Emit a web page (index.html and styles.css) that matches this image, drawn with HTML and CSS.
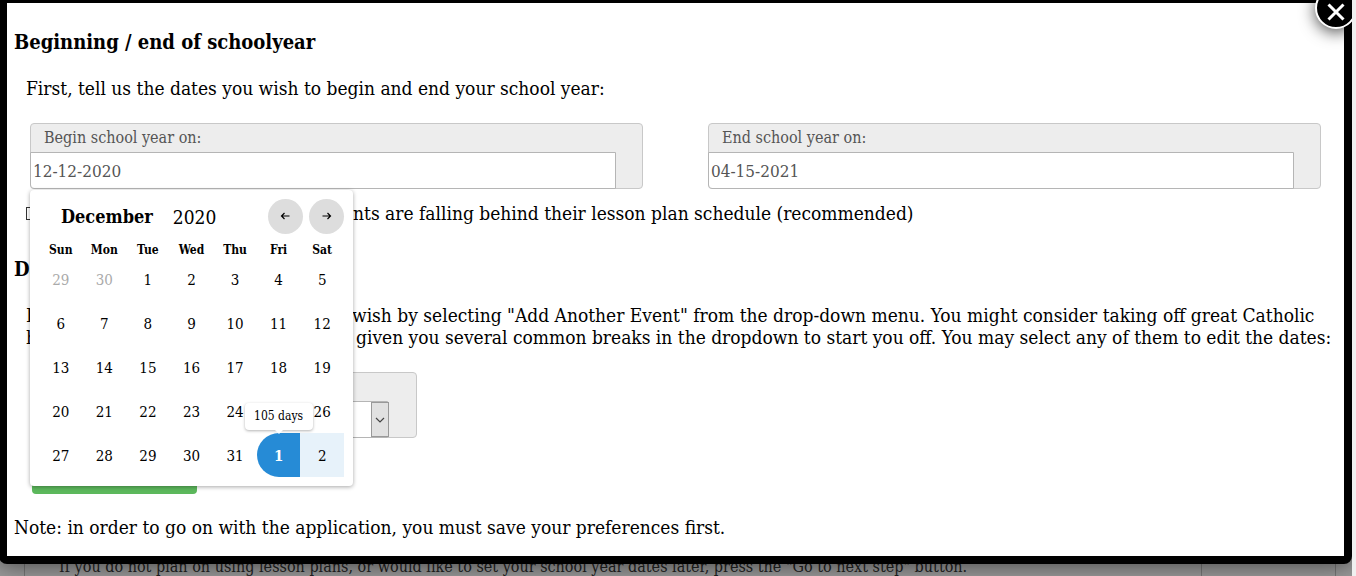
FILE: index.html
```html
<!DOCTYPE html>
<html lang="en">
<head>
<meta charset="utf-8">
<title>School year preferences</title>
<link rel="stylesheet" href="styles.css">
</head>
<body>
<div class="page">
  <main class="modal" role="dialog" aria-label="School year preferences">
    <button class="close" type="button" aria-label="Close">
      <svg width="20" height="20" viewBox="0 0 20 20"><path d="M2.500 2.500 17.500 17.500M17.500 2.500 2.500 17.500" stroke="#fff" stroke-width="3" fill="none"/></svg>
    </button>

    <h2 class="heading">Beginning / end of schoolyear</h2>
    <p class="text">First, tell us the dates you wish to begin and end your school year:</p>

    <div class="fields">
      <div class="field field-begin">
        <label class="label" for="begin">Begin school year on:</label>
        <input class="input" id="begin" type="text" value="12-12-2020">

        <div class="picker">
          <div class="picker-head">
            <strong class="month">December</strong>
            <span class="year">2020</span>
            <button class="nav" type="button" aria-label="Previous month"><svg width="11" height="11" viewBox="0 0 11 11"><path d="M9.500 5H1.500M4.500 2l-3 3 3 3"/></svg></button>
            <button class="nav" type="button" aria-label="Next month"><svg width="11" height="11" viewBox="0 0 11 11"><path d="M1.500 5h8M6.500 2l3 3-3 3"/></svg></button>
          </div>
          <table class="days">
            <thead><tr><th>Sun</th><th>Mon</th><th>Tue</th><th>Wed</th><th>Thu</th><th>Fri</th><th>Sat</th></tr></thead>
            <tbody>
              <tr><td class="muted">29</td><td class="muted">30</td><td>1</td><td>2</td><td>3</td><td>4</td><td>5</td></tr>
              <tr><td>6</td><td>7</td><td>8</td><td>9</td><td>10</td><td>11</td><td>12</td></tr>
              <tr><td>13</td><td>14</td><td>15</td><td>16</td><td>17</td><td>18</td><td>19</td></tr>
              <tr><td>20</td><td>21</td><td>22</td><td>23</td><td>24</td><td></td><td>26</td></tr>
              <tr><td>27</td><td>28</td><td>29</td><td>30</td><td>31</td><td class="start">1<span class="tip">105 days</span></td><td class="range">2</td></tr>
            </tbody>
          </table>
        </div>
      </div>
      <div class="field">
        <label class="label" for="end">End school year on:</label>
        <input class="input" id="end" type="text" value="04-15-2021">
      </div>
    </div>

    <div class="check-row">
      <input class="check" id="notify" type="checkbox" checked>
      <label for="notify"><span class="check-lead">Notify me if stude</span>nts are falling behind their lesson plan schedule (recommended)</label>
    </div>

    <h2 class="heading heading-next">Days off</h2>
    <p class="text"><span class="lead">Include as many events as you</span>wish by selecting "Add Another Event" from the drop-down menu. You might consider taking off great Catholic<br><span class="lead lead-wide">holidays. We have</span>given you several common breaks in the dropdown to start you off. You may select any of them to edit the dates:</p>

    <div class="field field-event">
      <label class="label" for="event">Select event:</label>
      <div class="select-wrap">
        <select class="input select" id="event"><option></option></select>
        <span class="arrow"><svg width="10" height="6" viewBox="0 0 10 6"><path d="M1 1l4 4 4-4" fill="none" stroke="#444" stroke-width="1.200"/></svg></span>
      </div>
    </div>

    <button class="save" type="button">Save</button>
    <p class="note">Note: in order to go on with the application, you must save your preferences first.</p>
  </main>
  <div class="backdrop">
    <div class="backdrop-main">If you do not plan on using lesson plans, or would like to set your school year dates later, press the "Go to next step" button.</div>
    <div class="backdrop-side"></div>
  </div>
</div>
</body>
</html>
```
FILE: styles.css
```css
* { box-sizing: border-box; }
body {
  margin: 0;
  overflow: hidden;
  background: #f0f0f0;
  color: #000;
  font: 19px/22px "DejaVu Serif Condensed", "DejaVu Serif", serif;
}
h2, p { margin: 0; font-size: inherit; }
button, input, select { font: inherit; color: inherit; }
.page {
  margin-right: 4px;
  height: 100vh;
  overflow: hidden;
  background: #999;
}
.modal {
  position: relative;
  z-index: 1;
  margin: -5px 0 0 -1px;
  padding: 25px 23px 18px;
  border: 8px solid #000;
  border-radius: 8px;
  background: #fff;
  box-shadow: 0 0 25px rgba(0, 0, 0, 0.6);
}
.close {
  position: absolute;
  top: -16px;
  right: -13px;
  display: flex;
  align-items: center;
  justify-content: center;
  width: 42px;
  height: 42px;
  padding: 7px 0 0;
  border: 2px solid #fff;
  border-radius: 50%;
  background: #000;
  box-shadow: 0 3px 16px rgba(0, 0, 0, 0.7);
}
.heading {
  margin-left: -16px;
  font-size: 20px;
  line-height: 28px;
}
.heading-next { margin-top: 31px; }
.text {
  margin: 21px -20px 24px -4px;
  white-space: nowrap;
}
.fields {
  display: grid;
  grid-template-columns: 1fr 1fr;
  gap: 65px;
}
.field {
  position: relative;
  height: 66px;
  border: 1px solid #c8c8c8;
  border-radius: 4px;
  background: #ededed;
  color: #555;
  font-size: 16px;
}
.label {
  display: block;
  height: 28px;
  padding-left: 13px;
  line-height: 27px;
}
.input {
  display: block;
  width: calc(100% - 25px);
  height: 37px;
  margin-left: -1px;
  padding: 0 2px;
  border: 1px solid #b5b5b5;
  border-radius: 0 0 0 4px;
  background: #fff;
  font-size: 17px;
}
.picker {
  position: absolute;
  z-index: 2;
  top: 66px;
  left: -1px;
  width: 323px;
  padding: 9px 9px 9px;
  border-radius: 4px;
  background: #fff;
  box-shadow: 0 1px 4px rgba(0, 0, 0, 0.35);
  color: #000;
}
.picker-head {
  display: flex;
  align-items: center;
  gap: 6px;
  height: 35px;
  padding-left: 22px;
  font-size: 19px;
}
.month { font-size: 18px; }
.year { flex: 1; padding-left: 14px; }
.nav {
  display: flex;
  align-items: center;
  justify-content: center;
  width: 35px;
  height: 35px;
  padding: 0;
  border: 0;
  border-radius: 50%;
  background: #ddd;
}
.nav path { fill: none; stroke: #000; stroke-width: 1.2; }
.days {
  width: 100%;
  table-layout: fixed;
  border-collapse: collapse;
  text-align: center;
}
.days th { height: 23px; padding: 10px 0 0; font-size: 12px; line-height: 13px; }
.days td { position: relative; height: 44px; padding: 2px 0 0; font-size: 15px; }
.days .muted { color: #aaa; }
.days .start {
  border-radius: 22px 0 0 22px;
  background: #268bd6;
  color: #fff;
  font-weight: bold;
}
.days .range { background: #e7f2fa; }
.tip {
  position: absolute;
  bottom: 47px;
  left: 50%;
  width: 68px;
  border-radius: 4px;
  background: #fff;
  box-shadow: 0 1px 3px rgba(0, 0, 0, 0.3);
  color: #000;
  font-size: 12px;
  font-weight: normal;
  line-height: 27px;
  transform: translateX(-50%);
}
.tip::after {
  content: "";
  position: absolute;
  top: 100%;
  left: 30px;
  border: 4px solid transparent;
  border-top-color: #fff;
  border-bottom: 0;
}
.check-row {
  display: flex;
  align-items: center;
  margin: 13px 0 0 -4px;
}
.check {
  width: 13px;
  height: 13px;
  margin: 0;
  border: 1px solid #333;
  background: #fff;
  appearance: none;
}
.check-lead {
  display: inline-block;
  width: 314px;
  text-align: right;
}
.lead { display: inline-block; width: 326px; }
.lead-wide { width: 330px; }
.field-event { width: 387px; }
.select-wrap { position: relative; width: calc(100% - 27px); }
.select { width: 100%; appearance: none; }
.arrow {
  position: absolute;
  top: 1px;
  right: 0;
  display: flex;
  align-items: center;
  justify-content: center;
  width: 18px;
  height: 35px;
  border: 1px solid #999;
  background: #e1e1e1;
  pointer-events: none;
}
.save {
  display: block;
  width: 165px;
  height: 36px;
  margin: 20px 0 22px 2px;
  border: 0;
  border-radius: 4px;
  background: #5cb85c;
  color: #fff;
}
.note { margin-left: -16px; }
.backdrop {
  display: flex;
  margin: -8px 16px 0 24px;
  border: 1px solid #777;
  border-width: 0 1px;
  color: #222;
  font-size: 16px;
}
.backdrop-main { flex: 1; height: 40px; padding-left: 34px; white-space: nowrap; }
.backdrop-side { width: 134px; border-left: 1px solid #777; }
```
